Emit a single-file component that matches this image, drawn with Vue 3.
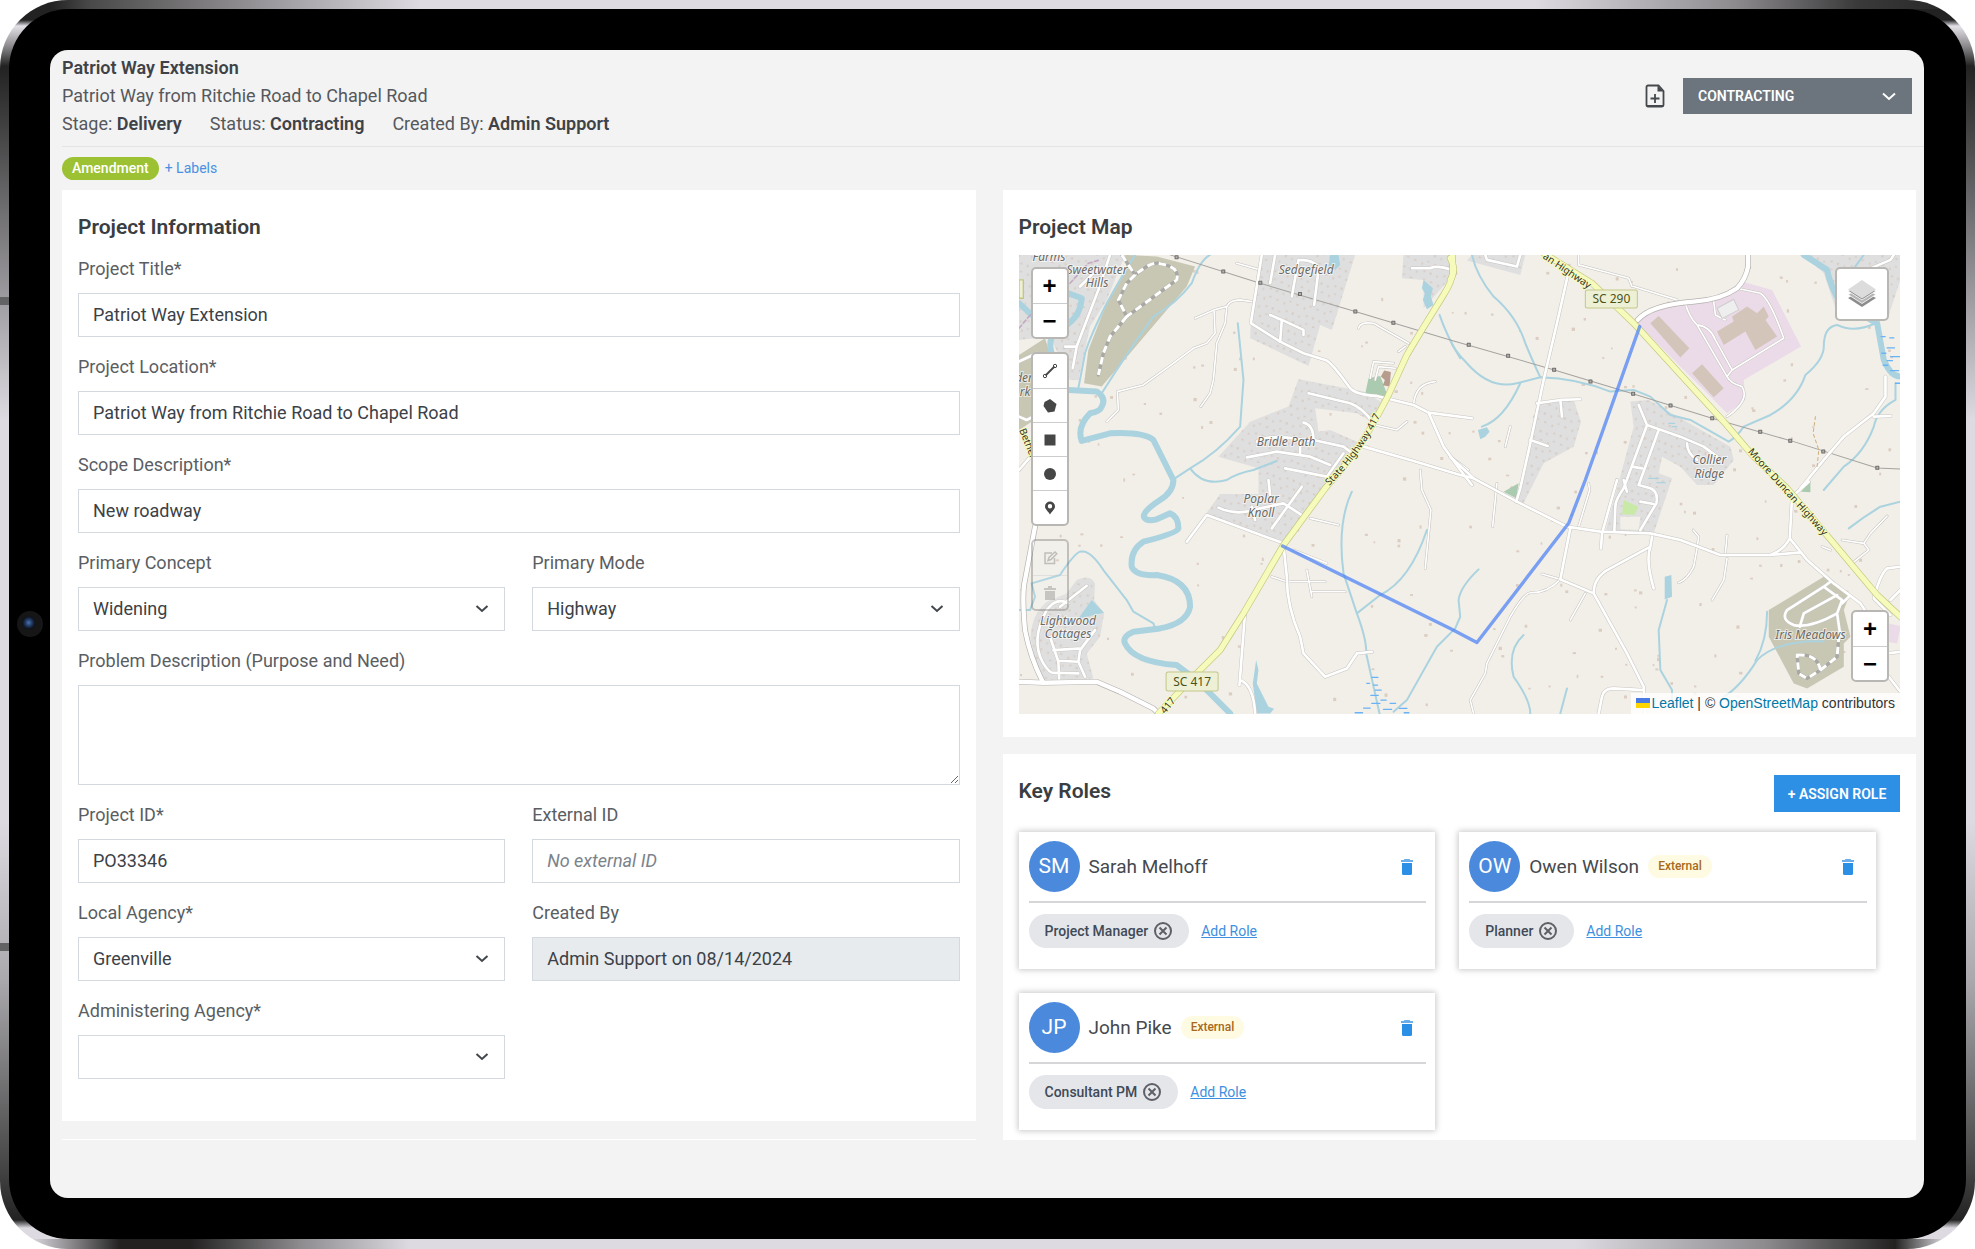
<script setup>
import { ref } from 'vue'

const form = ref({
  title: 'Patriot Way Extension',
  location: 'Patriot Way from Ritchie Road to Chapel Road',
  scope: 'New roadway',
  concept: 'Widening',
  mode: 'Highway',
  problem: '',
  projectId: 'PO33346',
  externalId: '',
  localAgency: 'Greenville',
  createdBy: 'Admin Support on 08/14/2024',
  adminAgency: ''
})

const stage = ref('CONTRACTING')

const fields = [
  { key: 'title', label: 'Project Title*', type: 'text', wide: true },
  { key: 'location', label: 'Project Location*', type: 'text', wide: true },
  { key: 'scope', label: 'Scope Description*', type: 'text', wide: true },
  { key: 'concept', label: 'Primary Concept', type: 'select', options: ['Widening'] },
  { key: 'mode', label: 'Primary Mode', type: 'select', options: ['Highway'] },
  { key: 'problem', label: 'Problem Description (Purpose and Need)', type: 'area', wide: true },
  { key: 'projectId', label: 'Project ID*', type: 'text' },
  { key: 'externalId', label: 'External ID', type: 'text', placeholder: 'No external ID' },
  { key: 'localAgency', label: 'Local Agency*', type: 'select', options: ['Greenville'] },
  { key: 'createdBy', label: 'Created By', type: 'text', readonly: true },
  { key: 'adminAgency', label: 'Administering Agency*', type: 'select', options: [''] }
]

const people = [
  { initials: 'SM', name: 'Sarah Melhoff', external: false, role: 'Project Manager' },
  { initials: 'OW', name: 'Owen Wilson', external: true, role: 'Planner' },
  { initials: 'JP', name: 'John Pike', external: true, role: 'Consultant PM' }
]

// Map geometry, in tile units of a third of a pixel
const residential = [
  'M760 45H1035L965 270L930 255L895 378L720 295L722 250Z',
  'M1180 45H1325V110L1240 205V120L1175 115Z',
  'M865 418L1060 455L1120 490L1085 545L1040 520L915 505L925 575L960 570L1050 610L1000 680L940 760L820 910L585 825L630 762H745V685L625 650L720 545L835 500Z',
  'M27 45H345L290 180L240 260L205 420H180L120 290L27 300Z',
  'M200 1020Q240 1000 255 1030L252 1080L282 1120L270 1190L230 1240L250 1315L90 1320L62 1200Q60 1130 110 1085L170 1060Z',
  'M1385 45L1370 62L1530 105L1545 45Z',
  'M1580 490L1690 480L1712 545L1690 620L1600 670L1540 790H1520Z',
  'M1860 485L1915 480L2160 620L2170 660L2110 735L2060 735L2010 680L1955 650L1945 700L1985 715L1930 880L1785 875L1870 560Z',
  'M2380 45H2670V120L2630 240L2480 220L2440 100Z'
]
const olive = [
  'M345 45L440 50L555 80L530 140L275 440L222 430L235 330L290 190L350 90Z',
  'M27 345L105 295L118 335L75 380L65 545L27 570Z',
  'M2440 1010L2515 1070L2500 1110L2520 1190L2500 1210V1280L2390 1345L2350 1330L2275 1190V1110Z'
]
const rivers = [
  'M175 450L260 455Q290 475 275 500Q270 515 240 520Q200 560 215 603L300 580Q400 575 430 600Q450 640 490 720Q490 755 450 780Q395 815 402 832Q410 845 440 838L480 820Q505 830 505 865Q500 880 400 905Q360 930 365 980Q375 1008 440 1005Q540 1020 540 1100Q530 1150 450 1165L370 1175Q335 1190 345 1210Q370 1265 500 1275L560 1320L600 1360L660 1420',
  'M175 160L215 175Q210 240 150 265Q110 290 125 340',
  'M27 190L65 225',
  'M2380 45L2450 90Q2460 140 2490 190L2600 250L2620 360Q2640 410 2670 410'
]
const streams = [
  'M375 45Q340 100 290 190Q240 290 225 340L205 445',
  'M600 45Q570 60 545 130Q500 190 430 230Q350 340 275 460',
  'M683 250L700 420L690 560Q620 640 540 685L490 718M540 685Q580 740 650 720Q680 700 730 690L800 663',
  'M1288 225Q1310 290 1350 355',
  'M1385 45Q1400 110 1450 170Q1520 230 1545 310Q1570 370 1590 412L1520 430Q1440 450 1370 370Q1330 330 1320 300',
  'M1530 430Q1480 540 1415 560M1590 412Q1700 415 1800 455L1870 450L1920 470L1980 525L2040 540L2155 605Q2180 590 2200 560L2280 525Q2360 480 2385 405Q2440 360 2440 320Q2440 260 2480 255Q2530 280 2595 250',
  'M2655 430V480Q2600 510 2590 560Q2560 640 2500 680L2440 750M2560 45L2520 100',
  'M27 1110H60L75 1070L65 1030L150 1005Q200 930 215 935Q240 930 280 990L350 1080L370 1115L430 1150L435 1165',
  'M1025 755Q980 850 1000 1000L1040 1120Q1070 1200 1068 1240L1108 1420M1250 870Q1200 1020 1110 1065L1040 1120',
  'M1150 1415L1190 1380L1280 1220L1335 1165L1350 1130L1345 1080Q1350 1040 1405 988',
  'M1540 1185Q1490 1230 1510 1310Q1560 1380 1560 1420M1670 1345L1650 1420',
  'M1970 1080L1945 1170L1950 1290L1985 1350V1400',
  'M2270 1115Q2270 1200 2235 1262M2440 1204Q2300 1200 2240 1260Q2190 1340 2140 1370',
  'M2515 865Q2560 830 2610 800L2670 785'
]
const ponds = [
  'M960 45H985L990 75L975 90L955 80Z',
  'M1240 120L1268 145L1262 170L1270 195L1250 208L1238 180L1244 160L1235 145Z',
  'M1403 570L1430 562L1438 575L1425 590L1410 598Z',
  'M245 1080L282 1118L205 1135Z',
  'M738 1260L745 1290L740 1330L775 1400L792 1406L780 1420H740L728 1330Z',
  'M1963 1010L1983 1005L1985 1070L1963 1078Z'
]
const lanes = [
  'M290 545L325 510L322 455L400 435L490 370L550 325L590 310L615 280L612 215M555 235L612 210L650 200Q660 180 690 180L725 185M650 200L645 250L620 310L610 420L600 460L572 500',
  'M680 70L750 90M1210 495Q1215 430 1275 425M1095 555L1160 570L1190 545M1045 265Q1050 245 1090 250L1195 310',
  'M785 1010L830 1025H945M890 990L905 1070M905 1055H1005M900 835L985 855M850 930L950 970M1230 690L1235 750L1262 810L1245 985',
  'M1705 45V75L1800 100L1855 115L1865 140M1870 140L2000 180M1735 730L1738 750L1705 860M1595 1002L1650 1018',
  'M1650 1018Q1610 1060 1560 1058Q1540 1060 1500 1130L1430 1270L1425 1300L1380 1380L1390 1420M1725 1060L1680 1140',
  'M2060 925L2050 980Q2030 1020 2005 1028M2060 925L2065 890L2048 870M2150 955L2140 1020L2105 1080M2150 885L2145 940',
  'M1080 415L1090 365L1150 370M1095 420L1105 380L1155 385M1165 335L1185 320M2495 900L2560 910L2580 880L2630 828M2560 910L2575 930L2525 970M2435 920L2460 930',
  'M1460 730L1447 860M1485 620L1500 560M1375 690L1320 650',
  'M2025 190Q2035 230 2060 255L2150 410Q2160 430 2195 440Q2220 480 2150 530M2060 255Q2100 260 2115 300L2165 390L2320 295Q2280 180 2250 160L2180 145M2150 410L2165 390M2110 185L2115 225L2145 240'
]
const streets = [
  'M755 45L722 250L810 305L880 340L950 362Q970 375 1020 445Q1040 465 1100 468L1210 495L1255 518L1385 535M1255 518L1300 620L1350 690L1385 735',
  'M1060 620L1200 660L1350 705L1390 715L1520 785L1670 860L1770 875L1920 880L2010 900L2130 945L2280 945L2370 937',
  'M1320 650L1390 715M1675 95L1640 250L1600 420L1560 610L1530 745L1518 785M1580 490L1650 480L1710 478M1650 480L1655 530M1560 600L1612 618',
  'M1885 495L1910 555L2010 590L2080 620L2120 650L2100 670M1910 555L1840 745Q1815 780 1815 800L1812 875M1945 570L1885 735L1920 745Q1945 755 1938 790L1890 870M1865 680L1895 685M2030 610Q2030 640 2060 660M1890 785L1930 792M1840 720L1850 755',
  'M1820 720L1775 880L1772 925M1680 865L1650 1018L1750 1060L1850 1240L1900 1340L1905 1420M1925 890L1920 920L1800 985Q1750 1010 1750 1060M1920 920Q1905 960 1930 1045M1900 1350L1810 1345Q1780 1345 1775 1370L1765 1420',
  'M2395 725L2345 770L2338 895Q2320 930 2280 945M2338 895L2390 960L2470 1030L2550 1090L2570 1120M2625 410V470L2590 520L2500 590L2440 660L2370 745M2590 530L2640 528M2670 980L2630 985Q2610 1000 2590 1075L2640 1125M2670 1050L2640 1080M2635 1310L2670 1355M2630 1240L2670 1235',
  'M300 45L265 150L215 280L200 320L188 385M165 320H200M210 140L260 90',
  'M795 45L780 130M865 60L845 170M865 60Q920 60 925 90L912 195M780 225L815 240L880 270V285M815 240L810 305M1205 85H1260Q1280 75 1325 90',
  'M895 460L1020 490Q1060 505 1085 545M880 548Q910 555 910 600L1000 620L1040 650M740 605Q770 585 850 595L910 605M710 652L800 635L900 650L960 675M870 610V640M825 685L950 710L1000 640M775 720L780 765',
  'M530 905L590 825L820 910M625 803Q680 830 750 805L820 790L875 825M875 740L785 865M725 800L735 840',
  'M820 915L830 1010Q830 1100 870 1190L880 1240L945 1310L1010 1285L1040 1240L1085 1235M705 1115L688 1335M690 1320Q730 1335 735 1420',
  'M230 1037L150 1100M175 1090Q140 1070 110 1110Q60 1200 100 1270Q120 1300 130 1298L205 1300M120 1190L145 1265L148 1325M205 1265L145 1262M255 1170L210 1230L205 1265L225 1310M130 1230L215 1225',
  'M2440 1040L2330 1110Q2310 1140 2350 1155Q2400 1165 2480 1120L2495 1080L2440 1040M2480 1065L2380 1120L2368 1160M2460 1025L2440 1040M2515 1070L2495 1090M2480 1120L2490 1190',
  'M1425 45L1430 60L1520 80L1530 45M2650 45L2640 60L2570 90M27 365L80 340M27 530L50 540L90 520M27 690L70 640'
]
const avenues = [
  'M2213 45V80Q2205 120 2180 145Q2130 180 2050 185Q1920 195 1882 240',
  'M27 1325L100 1328L260 1325L330 1355L430 1405L450 1425',
  'M75 860L45 1020Q35 1060 45 1170Q60 1250 98 1325'
]
const highways = [
  'M1327 45V100Q1325 125 1300 165L1235 270L1190 345L1130 475L1095 540Q1040 640 945 745L820 915L700 1120L630 1230L560 1300L445 1420',
  'M1600 40L1745 130L1870 250L2140 545L2230 650L2330 745L2470 910L2600 1065L2675 1135',
  'M1320 55Q1340 90 1320 120'
]
const privateRoads = [
  'M335 45L375 105L350 130L325 180L350 230L500 120Q510 80 450 72Q430 60 375 105M350 230L300 290L280 340L265 405',
  'M2360 1245Q2420 1240 2430 1290L2390 1315L2365 1300ZM2430 1290L2480 1250L2485 1190'
]
const pylons = [
  [500, 53], [640, 95], [751, 129], [870, 163], [1036, 215], [1150, 249], [1376, 315], [1494, 348], [1632, 390],
  [1741, 425], [1869, 462], [1981, 497], [2106, 535], [2250, 576], [2340, 603], [2439, 635], [2601, 684]
]

// Lone houses scattered between the neighbourhoods
const houses = []
let seed = 7
const next = () => (seed = (seed * 16807) % 2147483647) / 2147483647
for (let i = 0; i < 260; i++) {
  houses.push({ x: Math.round(30 + next() * 2620), y: Math.round(50 + next() * 1360), w: Math.round(5 + next() * 5), h: Math.round(5 + next() * 5) })
}
</script>

<template>
  <div class="device">
    <span class="side-key upper"></span>
    <span class="side-key lower"></span>
    <div class="bezel">
      <span class="camera"></span>
      <main class="screen">
        <header class="top">
          <div class="summary">
            <h1>Patriot Way Extension</h1>
            <p>Patriot Way from Ritchie Road to Chapel Road</p>
            <p class="facts">
              <span>Stage: <b>Delivery</b></span>
              <span>Status: <b>Contracting</b></span>
              <span>Created By: <b>Admin Support</b></span>
            </p>
          </div>
          <div class="actions">
            <button class="icon-button" type="button" aria-label="Add document">
              <svg width="20" height="24" viewBox="0 0 20 24">
                <path d="M3 1.500h10.500L18.500 7v14a1.500 1.500 0 0 1-1.500 1.500H3A1.500 1.500 0 0 1 1.500 21V3A1.500 1.500 0 0 1 3 1.500Z" fill="none" stroke="#45484c" stroke-width="1.800" />
                <path d="M12.500 1.500v6h6Z" fill="#45484c" />
                <path d="M2 21.800h16M10 10v9M5.500 14.500h9" stroke="#45484c" stroke-width="1.800" />
              </svg>
            </button>
            <div class="picker stage">
              <select v-model="stage" aria-label="Project status"><option>CONTRACTING</option></select>
              <svg width="14" height="9" viewBox="0 0 14 9"><path d="M1 1.500l6 5.500 6-5.500" /></svg>
            </div>
          </div>
        </header>

        <div class="tags">
          <span class="tag">Amendment</span>
          <a href="#">+ Labels</a>
        </div>

        <div class="columns">
          <div class="column">
            <section class="card info">
              <h2>Project Information</h2>
              <form class="fields">
                <div v-for="f in fields" :key="f.key" class="field" :class="{ wide: f.wide }">
                  <label :for="f.key">{{ f.label }}</label>
                  <div v-if="f.type === 'select'" class="picker">
                    <select :id="f.key" v-model="form[f.key]">
                      <option v-for="o in f.options" :key="o" :value="o">{{ o }}</option>
                    </select>
                    <svg width="14" height="9" viewBox="0 0 14 9"><path d="M1.500 2l5.500 5 5.500-5" /></svg>
                  </div>
                  <textarea v-else-if="f.type === 'area'" :id="f.key" v-model="form[f.key]"></textarea>
                  <input v-else :id="f.key" v-model="form[f.key]" type="text" :placeholder="f.placeholder" :readonly="f.readonly" />
                </div>
              </form>
            </section>
            <section class="card following"></section>
          </div>

          <div class="column">
            <section class="card map-card">
              <h2>Project Map</h2>
              <div class="map">
                <svg class="tiles" viewBox="0 0 881 459" preserveAspectRatio="xMidYMid slice">
                  <defs>
                    <pattern id="homes" width="62" height="54" patternUnits="userSpaceOnUse" patternTransform="rotate(14)">
                      <path d="M5 6h6v7h-6zM26 10h5v6h-5zM47 4h7v5h-7zM12 32h7v5h-7zM36 36h5v7h-5zM52 28h6v5h-6z" fill="#d7cbc3" />
                    </pattern>
                    <path id="way-417" d="M310 231Q340 202 360 163L376 128" />
                    <path id="way-moore" d="M728 197L834 314" />
                  </defs>
                  <g transform="translate(-9 -15) scale(0.33333)" fill="none" stroke-linejoin="round" stroke-linecap="round">
                    <rect x="20" y="40" width="2660" height="1390" fill="#f2efe9" />
                    <rect v-for="(h, i) in houses" :key="i" :x="h.x" :y="h.y" :width="h.w" :height="h.h" fill="#dccdc2" />
                    <g v-for="(d, i) in residential" :key="'r' + i">
                      <path :d="d" fill="#dfdfdf" />
                      <path :d="d" fill="url(#homes)" />
                    </g>
                    <path v-for="(d, i) in olive" :key="'o' + i" :d="d" fill="#c7c7b4" />
                    <path d="M1875 245L1920 205L2100 185L2195 125L2285 150L2372 320L2200 420L2205 480L2150 520ZM2635 1150L2670 1158L2660 1210L2630 1205Z" fill="#ebdbe8" />
                    <path d="M1075 415L1110 408L1135 475L1065 462ZM1480 755L1525 730L1518 775ZM2372 755L2400 722V757Z" fill="#aacbaf" />
                    <path d="M1840 780L1885 800L1872 825L1835 822Z" fill="#c9eaa7" />
                    <path d="M1830 830L1890 830L1885 870L1830 868Z" fill="#f2efe9" />
                    <path v-for="(d, i) in streams" :key="'s' + i" :d="d" stroke="#aad3df" stroke-width="6" />
                    <path v-for="(d, i) in rivers" :key="'v' + i" :d="d" stroke="#aad3df" stroke-width="18" />
                    <path v-for="(d, i) in ponds" :key="'p' + i" :d="d" fill="#aad3df" />
                    <path d="M1035 1418h22M1060 1404h20M1085 1390h24M1070 1330h8M1085 1312h18M1090 1335h12M1095 1350h18M1082 1366h22M1112 1380h16M1120 1408h24M1140 1390h16M1168 1405h22M1182 1418h14M2612 290h12M2638 294h12M2630 324h22M2614 340h12M2640 350h30M2630 362h16M2618 376h14M2640 392h24M2655 430h15" stroke="#68b2f6" stroke-width="4" />
                    <path d="M1975 550h18M1985 560h14M1915 715h30M1940 728h24" stroke="#aad3df" stroke-width="4" />
                    <path d="M480 45L750 130L1035 215L1320 300L1632 390L1870 462L2105 535L2350 605L2600 684L2670 687" stroke="#a5a39f" stroke-width="3" />
                    <g stroke="#c4c1bd" stroke-width="8"><path v-for="(d, i) in lanes" :key="i" :d="d" /></g>
                    <g stroke="#ffffff" stroke-width="5"><path v-for="(d, i) in lanes" :key="i" :d="d" /></g>
                    <g stroke="#c9c6c2" stroke-width="11"><path v-for="(d, i) in streets" :key="i" :d="d" /></g>
                    <g stroke="#ffffff" stroke-width="8"><path v-for="(d, i) in streets" :key="i" :d="d" /></g>
                    <g stroke="#b5b2ae" stroke-width="17"><path v-for="(d, i) in avenues" :key="i" :d="d" /></g>
                    <g stroke="#ffffff" stroke-width="13"><path v-for="(d, i) in avenues" :key="i" :d="d" /></g>
                    <g stroke="#aaa8a4" stroke-width="10"><path v-for="(d, i) in privateRoads" :key="i" :d="d" /></g>
                    <g stroke="#ffffff" stroke-width="9" stroke-dasharray="22 14" stroke-linecap="butt"><path v-for="(d, i) in privateRoads" :key="i" :d="d" /></g>
                    <path d="M1920 250L1945 228L2037 325L2010 353ZM2045 400L2075 373L2140 445L2110 472ZM2120 275L2170 245L2165 230L2210 200L2240 220L2260 200L2275 230L2265 240L2300 290L2235 330L2205 275L2140 315Z" fill="#d3c5ba" />
                    <path d="M1122 392L1142 396L1138 440L1118 436L1124 420L1112 410Z" fill="#b79c8e" />
                    <path d="M2120 205L2170 178L2185 210L2135 236Z" fill="#eeeeee" stroke="#cfcccc" stroke-width="3" />
                    <path d="M2415 530L2408 580L2425 630L2420 680" stroke="#cfae75" stroke-width="3" stroke-dasharray="9 9" />
                    <path d="M27 265L65 220M180 130L235 70L270 60" stroke="#c4a9c4" stroke-width="5" stroke-dasharray="12 8" />
                    <g stroke="#c3c77e" stroke-width="20"><path v-for="(d, i) in highways" :key="i" :d="d" /></g>
                    <g stroke="#f6fabb" stroke-width="16"><path v-for="(d, i) in highways" :key="i" :d="d" /></g>
                    <rect v-for="p in pylons" :key="p[0]" :x="p[0] - 5" :y="p[1] - 5" width="9" height="9" fill="#b5b3af" stroke="#6e6c69" stroke-width="3" />
                    <path d="M27 120H40V175H27Z" fill="#eef0d5" stroke="#c3c77e" stroke-width="4" />
                    <path d="M817 918L1320 1165L1400 1207L1675 850L1725 720L1888 260" stroke="#4a80f5" stroke-opacity="0.72" stroke-width="10" />
                  </g>
                  <g class="shields">
                    <rect x="566" y="35" width="52" height="18" rx="2" />
                    <rect x="147" y="417" width="52" height="19" rx="2" />
                    <text x="592" y="48">SC 290</text>
                    <text x="173" y="431">SC 417</text>
                  </g>
                  <g class="places">
                    <text x="30" y="6">Farms</text>
                    <text x="78" y="19">Sweetwater</text>
                    <text x="78" y="32">Hills</text>
                    <text x="287" y="19">Sedgefield</text>
                    <text x="267" y="191">Bridle Path</text>
                    <text x="242" y="248">Poplar</text>
                    <text x="242" y="262">Knoll</text>
                    <text x="690" y="209">Collier</text>
                    <text x="690" y="223">Ridge</text>
                    <text x="49" y="370">Lightwood</text>
                    <text x="49" y="383">Cottages</text>
                    <text x="791" y="384">Iris Meadows</text>
                    <text x="5" y="127">der</text>
                    <text x="6" y="141">rk</text>
                  </g>
                  <g class="ways">
                    <text><textPath href="#way-417">State Highway 417</textPath></text>
                    <text><textPath href="#way-moore">Moore Duncan Highway</textPath></text>
                    <text transform="translate(523 3) rotate(34)">an Highway</text>
                    <text transform="translate(146 459) rotate(-51)">417</text>
                    <text transform="translate(0 175) rotate(68)">Bethel</text>
                  </g>
                </svg>

                <div class="controls left">
                  <div class="bar">
                    <button type="button" class="sign" aria-label="Zoom in">+</button>
                    <button type="button" class="sign" aria-label="Zoom out">−</button>
                  </div>
                  <div class="bar draw">
                    <button type="button" aria-label="Draw line"><svg width="16" height="16" viewBox="0 0 16 16"><path d="M3.500 12.500l9-9" stroke="#464646" stroke-width="1.800" /><circle cx="3" cy="13" r="1.700" fill="none" stroke="#464646" /><circle cx="13" cy="3" r="1.700" fill="none" stroke="#464646" /></svg></button>
                    <button type="button" aria-label="Draw polygon"><svg width="16" height="16" viewBox="0 0 16 16"><path d="M8 1l6.500 5L12.500 13.500l-6.500 1L1.500 8l1-4Z" fill="#464646" /></svg></button>
                    <button type="button" aria-label="Draw rectangle"><svg width="16" height="16" viewBox="0 0 16 16"><path d="M2.500 2.500h11v11h-11z" fill="#464646" /></svg></button>
                    <button type="button" aria-label="Draw circle"><svg width="16" height="16" viewBox="0 0 16 16"><circle cx="8" cy="8" r="6" fill="#464646" /></svg></button>
                    <button type="button" aria-label="Place marker"><svg width="16" height="16" viewBox="0 0 16 16"><path fill-rule="evenodd" d="M8 1.500a5 5 0 0 1 5 5c0 3-3.500 5-5 8-1.500-3-5-5-5-8a5 5 0 0 1 5-5Zm0 2.500a2.200 2.200 0 1 0 0 4.400 2.200 2.200 0 0 0 0-4.400Z" fill="#464646" /></svg></button>
                  </div>
                  <div class="bar faded">
                    <button type="button" disabled aria-label="Edit shapes"><svg width="16" height="16" viewBox="0 0 16 16"><path d="M10 3H3v10.500h9.500V8M6 10.500l1-3L13 2l1.800 1.800L9 9.500Z" fill="none" stroke="#777" stroke-width="1.500" /></svg></button>
                    <button type="button" disabled aria-label="Delete shapes"><svg width="16" height="16" viewBox="0 0 16 16"><path d="M2 3h4V1h4v2h4v2H2ZM3 6h10v9H3Z" fill="#888" /></svg></button>
                  </div>
                </div>
                <button type="button" class="layers" aria-label="Layers">
                  <svg width="32" height="32" viewBox="0 0 32 32">
                    <path d="M2 20l14-7 14 7-14 9Z" fill="#8c8c8c" />
                    <path d="M2 16.500l14-7 14 7-14 9Z" fill="#b5b5b5" stroke="#fff" stroke-width="0.800" />
                    <path d="M2 13l14-7 14 7-14 9Z" fill="#909090" stroke="#fff" stroke-width="0.800" />
                    <path d="M2 11.500L16 2l14 9.500-14 9Z" fill="#dcdcdc" />
                  </svg>
                </button>
                <div class="bar corner">
                  <button type="button" class="sign" aria-label="Zoom in">+</button>
                  <button type="button" class="sign" aria-label="Zoom out">−</button>
                </div>
                <p class="credit">
                  <svg width="14" height="10" viewBox="0 0 14 10"><path d="M0 0h14v5H0z" fill="#4c7be1" /><path d="M0 5h14v5H0z" fill="#ffd500" /></svg>
                  <a href="#">Leaflet</a> | © <a href="#">OpenStreetMap</a> contributors
                </p>
              </div>
            </section>

            <section class="card roles">
              <div class="roles-head">
                <h2>Key Roles</h2>
                <button type="button" class="assign">+ ASSIGN ROLE</button>
              </div>
              <div class="people">
                <article v-for="p in people" :key="p.initials" class="person">
                  <div class="who">
                    <span class="avatar">{{ p.initials }}</span>
                    <span class="name">{{ p.name }}</span>
                    <span v-if="p.external" class="external">External</span>
                    <button type="button" class="remove" :aria-label="'Remove ' + p.name">
                      <svg width="14" height="16" viewBox="0 0 14 16"><path d="M4.500 0h5l.8 1H13v2H1V1h2.700Z" fill="#69aeeb" /><path d="M2 4h10v10.500a1.500 1.500 0 0 1-1.500 1.500h-7A1.500 1.500 0 0 1 2 14.500Z" fill="#2c8fe6" /></svg>
                    </button>
                  </div>
                  <div class="duties">
                    <span class="duty">{{ p.role }}
                      <button type="button" :aria-label="'Remove role ' + p.role">
                        <svg width="18" height="18" viewBox="0 0 18 18"><circle cx="9" cy="9" r="8" /><path d="M5.500 5.500l7 7M12.500 5.500l-7 7" /></svg>
                      </button>
                    </span>
                    <a href="#">Add Role</a>
                  </div>
                </article>
              </div>
            </section>
          </div>
        </div>
      </main>
    </div>
  </div>
</template>

<style>
body {
  margin: 0;
  background: #ffffff;
}
</style>

<style scoped>
* {
  box-sizing: border-box;
}
h1,
h2,
p {
  margin: 0;
}
button {
  padding: 0;
  border: 0;
  background: none;
  font: inherit;
  color: inherit;
}
svg {
  display: block;
}

.device {
  position: relative;
  display: flex;
  min-height: 100vh;
  padding: 9px 9px 10px;
  border-radius: 68px;
  background:
    linear-gradient(90deg, #222 50px, #4a4949 90px, #8d8b8e 240px, #dddbe1 420px, #dddbe1 calc(100% - 440px), #8d8b8e calc(100% - 240px), #3b3a3b 94%, #222 100%) top / 100% 9px no-repeat,
    linear-gradient(90deg, #dddbe1 30px, #8d8b8e 70px, #222120 120px, #222120 190px, #8d8b8e 300px, #dddbe1 410px, #dddbe1 calc(100% - 400px), #8d8b8e calc(100% - 210px), #222120 calc(100% - 80px), #dddbe1 calc(100% - 30px)) bottom / 100% 10px no-repeat,
    linear-gradient(180deg, #222 0, #222 20px, #e4e2e8 26px, #8d8b8e 46px, #222 66px, #333 100px, #99979b 290px, #dddbe1 420px, #dddbe1 820px, #aaa8ac 980px, #444 1170px, #222 1220px, #dddbe1 1228px);
  font-family: Roboto, "Liberation Sans", sans-serif;
  color: #3f4348;
}
.side-key {
  position: absolute;
  left: 0;
  width: 9px;
  height: 8px;
  background: #636365;
}
.upper {
  top: 297px;
}
.lower {
  top: 943px;
}
.bezel {
  position: relative;
  display: flex;
  flex: 1;
  padding: 41px 42px 41px 41px;
  border-radius: 60px;
  background: #000000;
}
.camera {
  position: absolute;
  left: 8px;
  top: 602px;
  width: 26px;
  height: 26px;
  border-radius: 50%;
  background: radial-gradient(circle at 45% 45%, #4d74ad 0, #24406c 3px, #10141d 6px, #161616 8px);
}
.screen {
  flex: 1;
  min-width: 0;
  padding-bottom: 58px;
  border-radius: 18px;
  background: #f3f3f3;
}

.top {
  display: flex;
  align-items: center;
  justify-content: space-between;
  margin-left: 12px;
  padding: 4px 12px 8px 0;
  border-bottom: 1px solid #e4e4e4;
  font-size: 18px;
  line-height: 28px;
  color: #55585c;
}
h1 {
  font-size: 18px;
  font-weight: 600;
  line-height: 28px;
  color: #3f4247;
}
.facts {
  display: flex;
  gap: 28px;
}
.facts b {
  font-weight: 600;
  color: #3f4247;
}
.actions {
  display: flex;
  align-items: center;
  gap: 18px;
}

.picker {
  position: relative;
}
.picker svg {
  position: absolute;
  right: 16px;
  top: 17px;
  fill: none;
  stroke: #43474c;
  stroke-width: 2;
  pointer-events: none;
}
.stage select {
  width: 229px;
  height: 36px;
  padding: 0 15px;
  border: 0;
  background: #6c757d;
  color: #ffffff;
  font-size: 14px;
  font-weight: 600;
}
.stage svg {
  top: 14px;
  stroke: #ffffff;
}

.tags {
  display: flex;
  align-items: center;
  gap: 6px;
  margin: 10px 12px;
  font-size: 14px;
  line-height: 23px;
}
.tag {
  padding: 0 10px;
  border-radius: 12px;
  background: #9cc132;
  color: #ffffff;
  font-weight: 500;
}
.tags a {
  color: #4a90e2;
  text-decoration: none;
}

.columns {
  display: grid;
  grid-template-columns: 1fr 1fr;
  gap: 27px;
  margin: 0 8px 0 12px;
}
.column {
  display: flex;
  flex-direction: column;
  min-width: 0;
}
.card {
  padding: 23px 16px;
  background: #ffffff;
}
h2 {
  font-size: 21px;
  font-weight: 600;
  line-height: 28px;
  color: #3a3d41;
}
.info {
  padding-bottom: 42px;
}
.following {
  flex: 1;
  min-height: 1px;
  margin-top: 18px;
  padding: 0;
}
.fields {
  display: grid;
  grid-template-columns: 1fr 1fr;
  gap: 18px 27px;
  margin-top: 16px;
}
.wide {
  grid-column: span 2;
}
.field label {
  display: block;
  margin-bottom: 12px;
  font-size: 18px;
  line-height: 24px;
  color: #5a5e63;
}
.field:not(:last-child) {
  margin-bottom: 0;
}
select {
  appearance: none;
  border-radius: 0;
  font-family: inherit;
}
.field input,
.field select,
.field textarea {
  display: block;
  width: 100%;
  height: 44px;
  padding: 0 14px 1px;
  border: 1px solid #d3d9de;
  border-radius: 0;
  background: #ffffff;
  font-family: inherit;
  font-size: 18px;
  color: #3c4147;
}
.field textarea {
  height: 100px;
  resize: vertical;
}
.field input::placeholder {
  font-style: italic;
  color: #7b838b;
}
.field input:read-only {
  background: #e7ebee;
}

.map-card {
  padding-bottom: 23px;
}
.map {
  position: relative;
  height: 459px;
  margin: 14px 0 0;
  overflow: hidden;
  background: #f2efe9;
}
.tiles {
  width: 100%;
  height: 100%;
}
.shields rect {
  fill: #eef0d5;
  stroke: #c3c78a;
}
.shields text {
  fill: #4b5216;
  font: 12px "Noto Sans", sans-serif;
  text-anchor: middle;
}
.places text {
  fill: #6a6a66;
  stroke: rgba(255, 255, 255, 0.6);
  stroke-width: 2px;
  paint-order: stroke;
  font: italic 12px "Noto Sans", sans-serif;
  text-anchor: middle;
}
.ways text {
  fill: #33332a;
  stroke: #f6fabb;
  stroke-width: 2px;
  paint-order: stroke;
  font: 10px "Noto Sans", sans-serif;
}
.controls {
  position: absolute;
  left: 12px;
  top: 12px;
  display: flex;
  flex-direction: column;
  gap: 13px;
}
.bar {
  display: flex;
  flex-direction: column;
  width: 38px;
  border: 2px solid #b9b7b4;
  border-radius: 5px;
  background: #ffffff;
}
.bar button {
  display: flex;
  align-items: center;
  justify-content: center;
  height: 34px;
}
.bar button + button {
  border-top: 1px solid #cccccc;
}
.bar .sign {
  font: bold 24px/32px "Liberation Sans", sans-serif;
  color: #000000;
}
.bar.faded {
  border-color: rgba(110, 108, 104, 0.9);
  background: rgba(255, 255, 255, 0.2);
  opacity: 0.4;
}
.layers {
  position: absolute;
  right: 11px;
  top: 12px;
  display: flex;
  align-items: center;
  justify-content: center;
  width: 54px;
  height: 54px;
  border: 2px solid #b9b7b4;
  border-radius: 5px;
  background: #ffffff;
}
.bar.corner {
  position: absolute;
  right: 11px;
  bottom: 32px;
}
.credit {
  position: absolute;
  right: 0;
  bottom: 0;
  padding: 0 5px 1px;
  background: rgba(255, 255, 255, 0.8);
  font: 14px/20px "Liberation Sans", Arial, sans-serif;
  color: #333333;
}
.credit svg {
  display: inline-block;
  margin-right: 1px;
}
.credit a {
  color: #0078a8;
  text-decoration: none;
}

.roles {
  flex: 1;
  margin-top: 17px;
  padding: 21px 16px 9px;
}
.roles-head {
  display: flex;
  align-items: flex-start;
  justify-content: space-between;
  height: 38px;
}
.roles-head h2 {
  line-height: 32px;
}
.assign {
  width: 126px;
  height: 37px;
  background: #2e90e5;
  color: #ffffff;
  font-size: 14px;
  font-weight: 600;
}
.people {
  display: grid;
  grid-template-columns: 1fr 1fr;
  gap: 24px;
  margin: 19px 24px 0 0;
}
.person {
  height: 137px;
  padding: 9px 9px 0 10px;
  background: #ffffff;
  box-shadow: 0 0 6px 1px rgba(0, 0, 0, 0.22);
}
.who {
  display: flex;
  align-items: center;
  height: 62px;
  padding: 0 12px 9px 0;
  border-bottom: 2px solid #d6d6d8;
}
.avatar {
  width: 51px;
  border-radius: 50%;
  background: #4b89dc;
  color: #ffffff;
  font-size: 21px;
  line-height: 51px;
  text-align: center;
}
.name {
  margin-left: 9px;
  font-size: 19px;
  color: #45494e;
}
.external {
  margin-left: 9px;
  padding: 0 10px;
  border-radius: 12px;
  background: #fefbe2;
  color: #a8691c;
  font-size: 12px;
  font-weight: 500;
  line-height: 23px;
}
.remove {
  margin-left: auto;
}
.duties {
  display: flex;
  align-items: center;
  gap: 12px;
  margin-top: 11px;
  font-size: 14px;
}
.duty {
  display: flex;
  align-items: center;
  gap: 6px;
  height: 34px;
  padding: 0 17px 0 16px;
  border-radius: 17px;
  background: #e5e6ea;
  font-weight: 500;
  color: #404a57;
}
.duty svg {
  fill: none;
  stroke: #5d6066;
  stroke-width: 2;
}
.duties a {
  color: #3d8fe0;
}
</style>
